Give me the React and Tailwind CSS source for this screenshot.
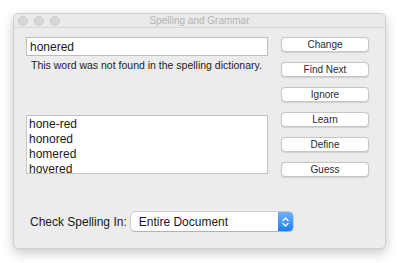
import React from "react"

const font = { fontFamily: '"Liberation Sans", Arial, sans-serif' }

function PushButton({ label }) {
  return (
    <button className="flex h-[15px] w-[88px] items-center justify-center rounded-[4px] border border-[#c6c6c6] bg-white text-[10px] leading-none text-[#2a2a2a] shadow-[0_0.5px_1px_rgba(0,0,0,0.12)]">
      {label}
    </button>
  )
}

function Stepper() {
  return (
    <svg width="7" height="12" viewBox="0 0 7 12" fill="none" stroke="white" strokeWidth="1.3" strokeLinecap="round" strokeLinejoin="round">
      <path d="M1 4.5 L3.5 2 L6 4.5" />
      <path d="M1 7.5 L3.5 10 L6 7.5" />
    </svg>
  )
}

export default function App() {
  const buttons = ["Change", "Find Next", "Ignore", "Learn", "Define", "Guess"]
  const guesses = ["hone-red", "honored", "homered", "hovered"]

  return (
    <div className="h-[263px] w-[400px] bg-white pl-[13px] pt-[13px]" style={font}>
      <div className="flex h-[236px] w-[373px] flex-col overflow-hidden rounded-[5px] border border-[#cfcfcf] bg-[#ececec] shadow-[0_4px_12px_rgba(0,0,0,0.22)]">
        {/* title bar */}
        <div className="relative flex h-[14px] items-center border-b border-[#d6d6d6] bg-[#eaeaea] pl-[4px]">
          <div className="flex gap-[6px]">
            <span className="h-[10px] w-[10px] rounded-full border border-[#cbcbcb] bg-[#d6d6d6]" />
            <span className="h-[10px] w-[10px] rounded-full border border-[#cbcbcb] bg-[#d6d6d6]" />
            <span className="h-[10px] w-[10px] rounded-full border border-[#cbcbcb] bg-[#d6d6d6]" />
          </div>
          <div className="absolute inset-0 flex items-center justify-center text-[10px] leading-none text-[#b3b3b3]">
            Spelling and Grammar
          </div>
        </div>

        {/* body */}
        <div className="flex flex-col px-[12px] pt-[9px]">
          <div className="flex gap-[13px]">
            <div className="flex w-[242px] flex-col">
              <div className="flex h-[19px] items-center border border-[#bdbdbd] bg-white pl-[3px] text-[12px] text-[#1a1a1a]">
                honered
              </div>
              <p className="mt-[3px] pl-[5px] text-[10.5px] leading-[12px] text-[#222]">
                This word was not found in the spelling dictionary.
              </p>
              <div className="mt-[44px] h-[59px] overflow-hidden border border-[#c4c4c4] bg-white pl-[2px] pt-[1px] text-[12px] leading-[15px] text-[#1a1a1a]">
                {guesses.map((g) => (
                  <div key={g}>{g}</div>
                ))}
              </div>
            </div>
            <div className="flex flex-col gap-[10px]">
              {buttons.map((b) => (
                <PushButton key={b} label={b} />
              ))}
            </div>
          </div>

          <div className="mt-[35px] flex items-center pl-[4px]">
            <span className="text-[12px] text-[#1a1a1a]">Check Spelling In:</span>
            <div className="ml-[4px] flex h-[19px] w-[162px] overflow-hidden rounded-[4px] bg-white shadow-[0_0_0_0.5px_rgba(0,0,0,0.25),0_1px_1px_rgba(0,0,0,0.15)]">
              <div className="flex flex-1 items-center pl-[8px] text-[12px] text-[#1a1a1a]">Entire Document</div>
              <div className="flex w-[15px] items-center justify-center bg-gradient-to-b from-[#6cb1fb] to-[#1a7ff7]">
                <Stepper />
              </div>
            </div>
          </div>
        </div>
      </div>
    </div>
  )
}
